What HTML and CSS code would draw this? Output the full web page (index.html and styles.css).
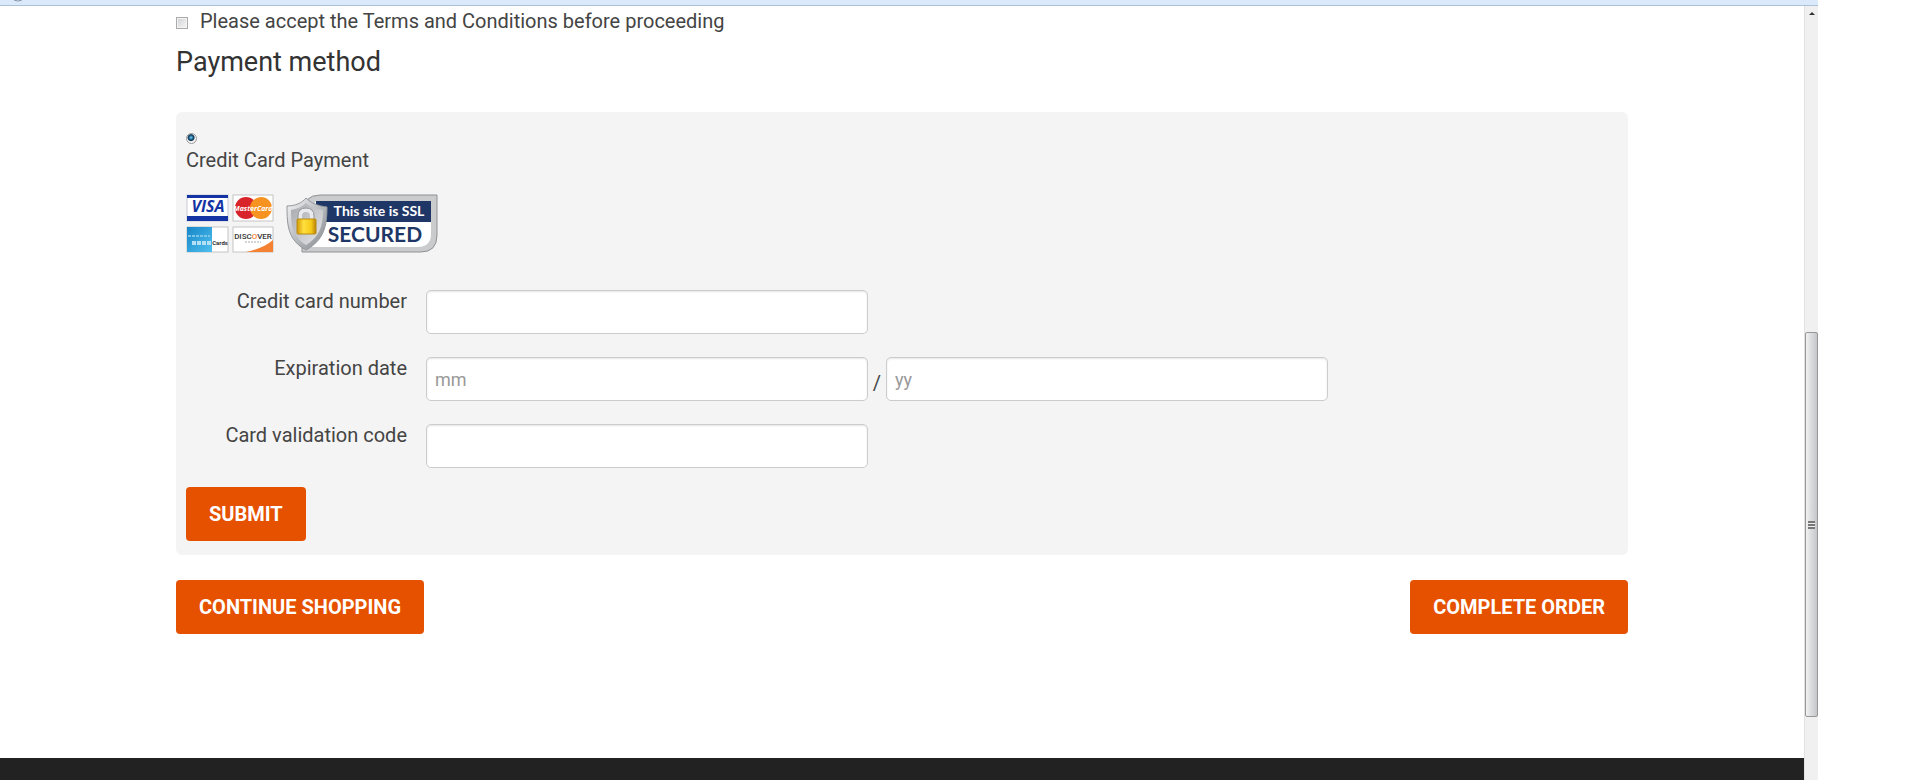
FILE: index.html
```
<!DOCTYPE html>
<html lang="en">
<head>
  <meta charset="UTF-8" />
  <meta name="viewport" content="width=device-width, initial-scale=1.0"/>
  <title>Payment method</title>
  <link rel="stylesheet" href="styles.css">
</head>
<body>

  <div class="window">
    <div class="toolbar">
      <svg class="toolbar-icon" width="16" height="2" viewBox="0 0 16 2">
        <circle cx="8" cy="-7" r="8" fill="#e8eef4" stroke="#8496a8"/>
      </svg>
    </div>

    <div class="viewport">
      <div class="page">
        <main class="container">
          <div class="terms">
            <input type="checkbox" id="terms">
            <label for="terms">Please accept the Terms and Conditions before proceeding</label>
          </div>

          <h2>Payment method</h2>

          <form class="payment-box" id="paymentForm">
            <div class="method">
              <input type="radio" id="creditCard" name="method" checked>
              <label for="creditCard">Credit Card Payment</label>
            </div>

            <div class="badges">
              <svg class="cards" width="88" height="60" viewBox="0 0 88 60" role="img" aria-label="Accepted cards">
                <defs>
                  <linearGradient id="amex" x1="0" y1="0" x2="1" y2="1">
                    <stop offset="0" stop-color="#1686c9"/>
                    <stop offset="1" stop-color="#4fc0ee"/>
                  </linearGradient>
                </defs>
                <!-- visa -->
                <rect x="1" y="1" width="41" height="26" fill="#fff" stroke="#c9ccd6"/>
                <rect x="1" y="1" width="41" height="3" fill="#1434a4"/>
                <rect x="1" y="22" width="41" height="5" fill="#1434a4"/>
                <text x="22" y="18" class="visa">VISA</text>
                <!-- mastercard -->
                <rect x="47" y="1" width="40" height="26" fill="#fff" stroke="#c4c4c4"/>
                <circle cx="60" cy="14" r="11" fill="#d8232a"/>
                <circle cx="75" cy="14" r="11" fill="#f79321"/>
                <text x="67" y="17" class="mastercard">MasterCard</text>
                <!-- american express -->
                <rect x="1" y="33" width="41" height="25" fill="#fff" stroke="#c4c4c4"/>
                <rect x="1" y="33" width="25" height="25" fill="url(#amex)"/>
                <path d="M2 42h22" stroke="#7cc4e8" stroke-width="2" stroke-dasharray="3 1"/>
                <path d="M6 49h20" stroke="#b4e0f5" stroke-width="4" stroke-dasharray="4 1"/>
                <text x="34" y="51" class="amex">Cards</text>
                <!-- discover -->
                <rect x="47" y="33" width="40" height="25" fill="#fff" stroke="#c4c4c4"/>
                <path d="M60 58Q78 54 87 46V58Z" fill="#f58233"/>
                <text x="67" y="45" class="discover">DISC<tspan fill="#f58233">O</tspan>VER</text>
                <path d="M59 48h16" stroke="#aaa" stroke-dasharray="2 1"/>
              </svg>

              <svg class="seal" width="152" height="60" viewBox="0 0 152 60" role="img" aria-label="This site is SSL secured">
                <defs>
                  <linearGradient id="shield" x1="0" y1="0" x2="1" y2="1">
                    <stop offset="0" stop-color="#f5f6f7"/>
                    <stop offset="0.5" stop-color="#b9bcc0"/>
                    <stop offset="1" stop-color="#85898f"/>
                  </linearGradient>
                  <linearGradient id="shieldInner" x1="0" y1="0" x2="1" y2="1">
                    <stop offset="0" stop-color="#a6a9ad"/>
                    <stop offset="1" stop-color="#e6e7e9"/>
                  </linearGradient>
                  <linearGradient id="lock" x1="0" y1="0" x2="1" y2="0">
                    <stop offset="0" stop-color="#d39a08"/>
                    <stop offset="0.35" stop-color="#ffdf3d"/>
                    <stop offset="0.75" stop-color="#f4c918"/>
                    <stop offset="1" stop-color="#b98205"/>
                  </linearGradient>
                </defs>
                <path d="M34 1H151V41Q151 58 135 58H16V20Q17 1 34 1Z" fill="#c9cbcd" stroke="#8e9195"/>
                <path d="M30 7H145V40Q145 53 131 53H22V20Z" fill="#fff"/>
                <path d="M30 7H145V28H30Z" fill="#1f3766"/>
                <path d="M20 4C16 9 9 12 1 12C1 32 2 46 20 56C38 46 41 32 41 13C32 12 25 9 20 4Z" fill="url(#shield)" stroke="#94979b"/>
                <path d="M20 9C16 13 11 15 5 16C5 33 7 43 20 51C33 43 37 33 37 16C30 15 24 13 20 9Z" fill="url(#shieldInner)"/>
                <path d="M14 27V22Q14 16 20 16Q26 16 26 22V27" fill="none" stroke="#e9eaec" stroke-width="4"/>
                <path d="M12 25V22Q12 14 20 14Q28 14 28 22V25" fill="none" stroke="#93979b"/>
                <rect x="11" y="25" width="19" height="15" rx="1" fill="url(#lock)" stroke="#b98a12"/>
                <text x="93" y="22" class="seal-small">This site is SSL</text>
                <text x="89" y="48" class="seal-large">SECURED</text>
              </svg>
            </div>

            <div class="row">
              <label for="cardNumber">Credit card number</label>
              <input type="text" class="field" id="cardNumber">
            </div>
            <div class="row">
              <label for="expMonth">Expiration date</label>
              <input type="text" class="field" id="expMonth" placeholder="mm">
              <span class="slash">/</span>
              <input type="text" class="field" id="expYear" placeholder="yy" aria-label="Expiration year">
            </div>
            <div class="row">
              <label for="cvc">Card validation code</label>
              <input type="text" class="field" id="cvc">
            </div>

            <button type="submit" class="btn">SUBMIT</button>
          </form>

          <div class="actions">
            <button type="button" class="btn">CONTINUE SHOPPING</button>
            <button type="button" class="btn">COMPLETE ORDER</button>
          </div>
        </main>
        <footer></footer>
      </div>

      <div class="scrollbar">
        <svg class="scroll-arrow" width="6" height="4" viewBox="0 0 6 4"><path d="M3 0L6 3H0Z" fill="#333"/></svg>
        <div class="track-above"></div>
        <div class="thumb"><span class="grip"></span></div>
        <div class="track-below"></div>
      </div>
    </div>
  </div>

</body>
</html>
```
FILE: styles.css
```
* {
  box-sizing: border-box;
}

body {
  margin: 0;
  font-family: Roboto, Arial, sans-serif;
  font-size: 20px;
  line-height: 28px;
  color: #444;
  background-color: #fff;
}

.window {
  min-height: 100vh;
  margin-right: 102px;
  display: flex;
  flex-direction: column;
}

.toolbar {
  height: 6px;
  padding-left: 10px;
  background-color: #dbeafa;
  border-bottom: 1px solid #afc1d6;
}

.toolbar-icon {
  display: block;
}

.viewport {
  flex: 1;
  display: flex;
}

.page {
  flex: 1;
  display: flex;
  flex-direction: column;
}

.container {
  flex: 1;
  width: 100%;
  max-width: 1500px;
  margin: 0 auto;
  padding: 1px 24px 0;
}

.terms {
  display: flex;
  align-items: center;
  gap: 12px;
}

.terms input {
  appearance: none;
  width: 12px;
  height: 12px;
  margin: 4px 0 0;
  border: 1px solid #aaa;
  background: linear-gradient(135deg, #cfd2d5, #f6f6f6);
  box-shadow: inset 0 0 0 1px #f4f4f4;
}

h2 {
  margin: 8px 0 31px;
  font-size: 27px;
  line-height: 38px;
  font-weight: normal;
  color: #333;
}

.payment-box {
  padding: 21px 10px 14px;
  background-color: #f4f4f4;
  border-radius: 6px;
}

.method {
  display: flex;
  flex-direction: column;
  align-items: flex-start;
  gap: 2px;
}

.method input {
  appearance: none;
  width: 11px;
  height: 11px;
  margin: 0;
  border: 1px solid #999;
  border-radius: 50%;
  background: radial-gradient(circle at 45% 40%, #7fd0f0 0, #17618f 2px, #14344c 3px, #f4f4f4 4px);
}

.badges {
  display: flex;
  gap: 12px;
  margin: 20px 0 36px;
}

.badges svg {
  display: block;
}

.cards text {
  text-anchor: middle;
}

.visa {
  font: italic bold 16px "Open Sans", sans-serif;
  fill: #1434a4;
}

.mastercard {
  font: italic bold 7px "Open Sans", sans-serif;
  fill: #fff;
}

.amex {
  font-size: 6px;
  font-weight: bold;
  fill: #333;
}

.discover {
  font-size: 8px;
  font-weight: 500;
  fill: #333;
}

.seal text {
  text-anchor: middle;
}

.seal-small {
  font: bold 14px Lato, sans-serif;
  fill: #fff;
}

.seal-large {
  font: bold 21px Lato, sans-serif;
  fill: #1f3766;
}

.row {
  display: flex;
  align-items: flex-start;
  margin-bottom: 23px;
}

.row:last-of-type {
  margin-bottom: 19px;
}

.row label {
  width: 221px;
  margin-right: 19px;
  line-height: 22px;
  text-align: right;
}

.field {
  flex: 0 1 442px;
  min-width: 0;
  height: 44px;
  padding: 0 8px;
  font-family: inherit;
  font-size: 18px;
  color: #444;
  background-color: #fff;
  border: 1px solid #ccc;
  border-radius: 5px;
  box-shadow: inset 0 1px 2px rgba(0, 0, 0, 0.1);
}

.field::placeholder {
  color: #999;
}

.slash {
  width: 18px;
  padding-top: 12px;
  text-align: center;
}

.btn {
  height: 54px;
  padding: 0 23px;
  font-family: inherit;
  font-size: 20px;
  font-weight: bold;
  color: #fff;
  background-color: #e65100;
  border: none;
  border-radius: 4px;
  cursor: pointer;
}

.payment-box .btn {
  display: block;
}

.actions {
  display: flex;
  justify-content: space-between;
  margin-top: 25px;
}

footer {
  height: 22px;
  background-color: #222;
}

.scrollbar {
  width: 14px;
  display: flex;
  flex-direction: column;
  align-items: center;
  background-color: #f0f0f0;
  border-left: 1px solid #e2e2e2;
}

.scroll-arrow {
  margin-top: 6px;
}

.track-above {
  flex: 317;
}

.thumb {
  flex: 384;
  width: 100%;
  display: flex;
  align-items: center;
  justify-content: center;
  background: linear-gradient(to right, #f2f2f2, #d9dadc 50%, #c6c7ca);
  border: 1px solid #979797;
  border-radius: 2px;
}

.grip {
  width: 7px;
  height: 8px;
  background: repeating-linear-gradient(#777 0, #777 2px, #eee 2px, #eee 3px);
}

.track-below {
  flex: 63;
}
```
